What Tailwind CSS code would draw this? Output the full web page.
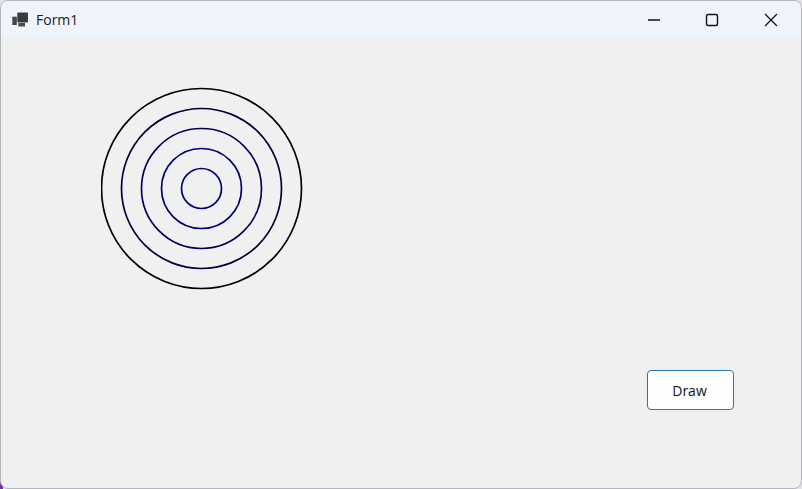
<!DOCTYPE html>
<html lang="en">
  <head>
    <meta charset="UTF-8" />
    <title>Form1</title>
    <script src="https://cdn.jsdelivr.net/npm/@tailwindcss/browser@4"></script>
  </head>
  <body class="relative h-[489px] w-[802px] overflow-hidden bg-[#e4e4e6] font-['Open_Sans',sans-serif]">
    <!-- Wallpaper showing through the bottom left corner -->
    <div class="absolute bottom-0 left-0 h-[8px] w-[3px] bg-[#7a2a9a]"></div>
    <!-- Window -->
    <div class="relative flex h-full flex-col overflow-hidden rounded-[8px] border border-[#b4b6bb] bg-[#f0f0f0]">
      <!-- Title bar -->
      <div class="flex h-[37px] items-center bg-[#eff3fa] pl-[11px]">
        <svg width="17" height="15" viewBox="0 0 17 15" class="mr-[7px]">
          <rect x="0.300" y="4.700" width="4.500" height="8.300" fill="#444444" />
          <rect x="5.300" y="0.500" width="10.700" height="10" rx="1" fill="#3a3a3a" />
          <rect x="6.300" y="11" width="6.700" height="3.500" fill="#4a4a4a" />
        </svg>
        <span class="text-[14px] text-[#1a1a1a]">Form1</span>
        <!-- Window buttons -->
        <div class="ml-auto flex items-center">
          <div class="flex w-[58px] justify-center">
            <svg width="14" height="14" viewBox="0 0 14 14"><path d="M1 7H13" stroke="#111111" stroke-width="1.300" /></svg>
          </div>
          <div class="flex w-[58px] justify-center">
            <svg width="14" height="14" viewBox="0 0 14 14"><rect x="1.500" y="1.500" width="11" height="11" rx="1.500" fill="none" stroke="#111111" stroke-width="1.400" /></svg>
          </div>
          <div class="flex w-[60px] justify-center pr-[1px]">
            <svg width="14" height="14" viewBox="0 0 14 14"><path d="M1 1L13 13M13 1L1 13" stroke="#111111" stroke-width="1.300" /></svg>
          </div>
        </div>
      </div>
      <!-- Form area -->
      <div class="flex flex-1 flex-col pl-[100px] pr-[67px] pt-[49px] pb-[78px]">
        <svg width="202" height="203" viewBox="0 0 202 203" fill="none" stroke-width="1.700">
          <circle cx="100.500" cy="101.500" r="100" stroke="#000000" />
          <circle cx="100.500" cy="101.500" r="80" stroke="#00003a" />
          <circle cx="100.500" cy="101.500" r="60" stroke="#00005f" />
          <circle cx="100.500" cy="101.500" r="40" stroke="#000075" />
          <circle cx="100.500" cy="101.500" r="20" stroke="#00007f" />
        </svg>
        <button class="mt-auto ml-auto h-[40px] w-[87px] rounded-[4px] border border-[#2079b5] bg-[#fdfdfd] pr-[2px] text-[14px] text-[#111111]">Draw</button>
      </div>
    </div>
  </body>
</html>
